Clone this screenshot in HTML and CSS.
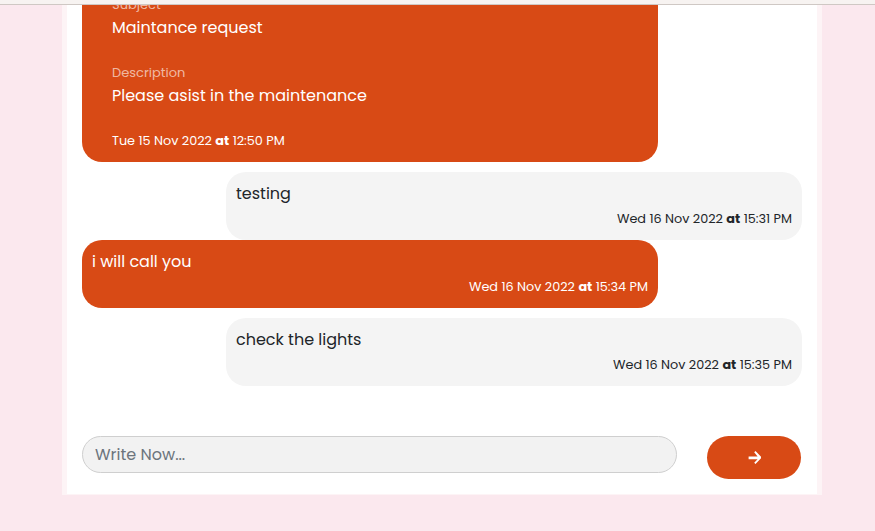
FILE: index.html
```html
<!DOCTYPE html>
<html>
<head>
<meta charset="utf-8">
<link rel="stylesheet" href="styles.css">
</head>
<body>
<header class="topbar"></header>
<main class="page">
  <section class="chat-card">
    <div class="messages">
      <div class="bubble bubble-in ticket">
        <div class="field">
          <div class="field-label">Subject</div>
          <div class="field-value">Maintance request</div>
        </div>
        <div class="field">
          <div class="field-label">Description</div>
          <div class="field-value">Please asist in the maintenance</div>
        </div>
        <div class="stamp stamp-left">Tue 15 Nov 2022 <b>at</b> 12:50 PM</div>
      </div>
      <div class="bubble bubble-out">
        <div class="msg">testing</div>
        <div class="stamp">Wed 16 Nov 2022 <b>at</b> 15:31 PM</div>
      </div>
      <div class="bubble bubble-in">
        <div class="msg">i will call you</div>
        <div class="stamp">Wed 16 Nov 2022 <b>at</b> 15:34 PM</div>
      </div>
      <div class="bubble bubble-out">
        <div class="msg">check the lights</div>
        <div class="stamp">Wed 16 Nov 2022 <b>at</b> 15:35 PM</div>
      </div>
    </div>
    <form class="composer">
      <input class="composer-input" type="text" placeholder="Write Now...">
      <button class="send-btn" type="button" aria-label="Send">
        <svg width="13" height="13" viewBox="0 0 13 13"><path fill="#fff" d="M6.2 1.2l1.3-1.1 5.3 5.5c.5.5.5 1.3 0 1.8l-5.3 5.5-1.3-1.1 3.4-3.6H0.6V5.6h9z"/></svg>
      </button>
    </form>
  </section>
</main>
</body>
</html>
```

FILE: styles.css
```css
* { box-sizing: border-box; }
html, body { margin: 0; padding: 0; }
body {
  background: #fbe8ee;
  font-family: "Poppins", "Open Sans", "Noto Sans", sans-serif;
  color: #212529;
  overflow: hidden;
}
.topbar {
  position: fixed;
  top: 0; left: 0; right: 0;
  height: 5px;
  background: #f7f3f1;
  border-bottom: 1px solid #cfc8c4;
  z-index: 10;
}
.page {
  margin-top: -26px;
  padding-left: 62px;
  width: 822px;
}
.chat-card {
  background: #fff;
  border: 5px solid #fdf4f6;
  border-top: none;
  border-bottom-width: 1px;
  padding: 0 15px 15px 15px;
}
.messages {
  display: flex;
  flex-direction: column;
  padding-bottom: 50px;
}
.bubble {
  width: 576px;
  border-radius: 20px;
  padding: 10px 10px 11px 10px;
}
.bubble-in {
  background: #d84a15;
  color: #fff;
  align-self: flex-start;
  margin-bottom: 10px;
}
.bubble-out {
  background: #f4f4f4;
  color: #212529;
  align-self: flex-end;
}
.ticket {
  padding: 21px 30px 11px 30px;
}
.field { margin-bottom: 22px; }
.field-label {
  font-size: 13px;
  line-height: 20px;
  color: rgba(255,255,255,0.62);
}
.field-value {
  font-size: 16px;
  line-height: 26px;
}
.msg {
  font-size: 16px;
  line-height: 24px;
}
.stamp {
  font-size: 12.8px;
  line-height: 20px;
  margin-top: 3px;
  text-align: right;
}
.stamp b { font-weight: 700; }
.stamp-left { text-align: left; margin-top: 0; }
.composer {
  display: flex;
  align-items: flex-start;
  gap: 30px;
  margin: 0;
  padding-right: 1px;
}
.composer-input {
  flex: 1;
  height: 37px;
  border-radius: 19px;
  border: 1px solid #cfcfcf;
  background: #f2f2f2;
  padding: 0 12px;
  font-family: inherit;
  font-size: 16px;
  color: #212529;
  outline: none;
}
.composer-input::placeholder { color: #6c757d; }
.send-btn {
  width: 94px;
  height: 43px;
  border-radius: 22px;
  border: none;
  background: #d84a15;
  display: flex;
  align-items: center;
  justify-content: center;
  padding: 0;
}
```
